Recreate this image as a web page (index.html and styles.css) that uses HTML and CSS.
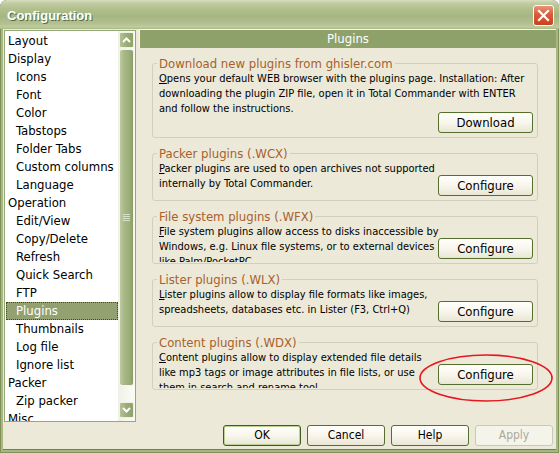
FILE: index.html
```html
<!DOCTYPE html>
<html lang="en">
<head>
<meta charset="utf-8">
<title>Configuration</title>
<link rel="stylesheet" href="styles.css">
</head>
<body>
<div class="window">
  <div class="titlebar">
    <span class="title">Configuration</span>
    <span class="close"><svg width="13" height="13" viewBox="0 0 13 13"><path d="M2 2 L11 11 M11 2 L2 11" stroke="#fff" stroke-width="2.2" stroke-linecap="square"/></svg></span>
  </div>
  <div class="client">
    <div class="main">
      <div class="tree">
        <ul class="items">
          <li class="l0">Layout</li>
          <li class="l0">Display</li>
          <li class="l1">Icons</li>
          <li class="l1">Font</li>
          <li class="l1">Color</li>
          <li class="l1">Tabstops</li>
          <li class="l1">Folder Tabs</li>
          <li class="l1">Custom columns</li>
          <li class="l1">Language</li>
          <li class="l0">Operation</li>
          <li class="l1">Edit/View</li>
          <li class="l1">Copy/Delete</li>
          <li class="l1">Refresh</li>
          <li class="l1">Quick Search</li>
          <li class="l1">FTP</li>
          <li class="l1 sel">Plugins</li>
          <li class="l1">Thumbnails</li>
          <li class="l1">Log file</li>
          <li class="l1">Ignore list</li>
          <li class="l0">Packer</li>
          <li class="l1">Zip packer</li>
          <li class="l0">Misc</li>
        </ul>
        <div class="vscroll">
          <div class="sbtn"><svg width="9" height="6" viewBox="0 0 9 6"><polyline points="1,5 4.5,1.5 8,5" fill="none" stroke="#fff" stroke-width="2"/></svg></div>
          <div class="thumb"><span class="grip"></span></div>
          <div class="track"></div>
          <div class="sbtn"><svg width="9" height="6" viewBox="0 0 9 6"><polyline points="1,1 4.5,4.5 8,1" fill="none" stroke="#fff" stroke-width="2"/></svg></div>
        </div>
      </div>
      <div class="panel">
        <div class="panel-head">Plugins</div>
        <div class="groups">
          <fieldset class="grp grp-first">
            <legend>Download new plugins from ghisler.com</legend>
            <div class="desc"><span class="u">O</span>pens your default WEB browser with the plugins page. Installation: After<br>downloading the plugin ZIP file, open it in Total Commander with ENTER<br>and follow the instructions.</div>
            <div class="btn-row"><button class="btn">Download</button></div>
          </fieldset>
          <fieldset class="grp">
            <legend>Packer plugins (.WCX)</legend>
            <div class="row">
              <div class="desc"><span class="u">P</span>acker plugins are used to open archives not supported<br>internally by Total Commander.</div>
              <button class="btn">Configure</button>
            </div>
          </fieldset>
          <fieldset class="grp">
            <legend>File system plugins (.WFX)</legend>
            <div class="row">
              <div class="desc"><span class="u">F</span>ile system plugins allow access to disks inaccessible by<br>Windows, e.g. Linux file systems, or to external devices<br>like Palm/PocketPC</div>
              <button class="btn">Configure</button>
            </div>
          </fieldset>
          <fieldset class="grp">
            <legend>Lister plugins (.WLX)</legend>
            <div class="row">
              <div class="desc"><span class="u">L</span>ister plugins allow to display file formats like images,<br>spreadsheets, databases etc. in Lister (F3, Ctrl+Q)</div>
              <button class="btn">Configure</button>
            </div>
          </fieldset>
          <fieldset class="grp">
            <legend>Content plugins (.WDX)</legend>
            <div class="row">
              <div class="desc"><span class="u">C</span>ontent plugins allow to display extended file details<br>like mp3 tags or image attributes in file lists, or use<br>them in search and rename tool</div>
              <button class="btn">Configure</button>
            </div>
          </fieldset>
        </div>
      </div>
    </div>
    <div class="buttons">
      <button class="dbtn default">OK</button>
      <button class="dbtn">Cancel</button>
      <button class="dbtn">Help</button>
      <button class="dbtn disabled">Apply</button>
    </div>
  </div>
  <svg class="mark" width="559" height="453" viewBox="0 0 559 453"><ellipse cx="486" cy="378" rx="66" ry="23" fill="none" stroke="#e8161e" stroke-width="1.6"/></svg>
</div>
</body>
</html>
```
FILE: styles.css
```css
* { box-sizing: border-box; }
html, body { margin: 0; padding: 0; background: #ffffff; }
body {
  width: 559px;
  height: 453px;
  overflow: hidden;
  font-family: "DejaVu Sans Condensed", "DejaVu Sans", sans-serif;
  color: #000;
}
.window {
  position: relative;
  width: 559px;
  height: 453px;
  display: flex;
  flex-direction: column;
  background: #a7b682;
  border-radius: 7px 7px 0 0;
  box-shadow: inset 0 0 0 1px #80925a;
}
.titlebar {
  height: 29px;
  flex: none;
  display: flex;
  align-items: center;
  justify-content: space-between;
  padding: 0 5px 0 7px;
  border-radius: 7px 7px 0 0;
  background: linear-gradient(to bottom, #d7dec0 0, #c2cda3 3px, #b1bf8d 9px, #a6b681 16px, #b1bf8f 23px, #c0cb9e 27px, #a9b885 29px);
}
.title {
  color: #fff;
  font: bold 13px "Liberation Sans", Arial, sans-serif;
  text-shadow: 1px 1px 0 #5c6b3c;
  padding-top: 1px;
}
.close {
  width: 21px;
  height: 21px;
  border: 1px solid #fdfdf8;
  border-radius: 3px;
  background: linear-gradient(#e8957a, #d85b3a 45%, #c6441f);
  display: flex;
  align-items: center;
  justify-content: center;
  margin-top: 2px;
}
.client {
  flex: 1;
  min-height: 0;
  margin: 0 3px 4px 3px;
  background: #ece9d8;
  display: flex;
  flex-direction: column;
  box-shadow: 0 1px 0 #6e7f4c;
}
.main {
  flex: none;
  height: 393px;
  display: flex;
}
.tree {
  width: 132px;
  height: 392px;
  flex: none;
  margin: 1px 0 0 1px;
  border: 1px solid #95a87a;
  background: #fff;
  display: flex;
}
.items {
  flex: 1;
  list-style: none;
  margin: 0;
  padding: 1px 0 0 1px;
  overflow: hidden;
  font-size: 13px;
}
.items li {
  height: 18px;
  line-height: 18px;
  white-space: nowrap;
}
.items .l0 { padding-left: 2px; }
.items .l1 { padding-left: 10px; }
.items .sel {
  background: #93a070;
  color: #fff;
  outline: 1px dotted #3e4a27;
  outline-offset: -1px;
}
.vscroll {
  width: 17px;
  flex: none;
  display: flex;
  flex-direction: column;
  padding: 1px 1px 3px 1px;
  background: linear-gradient(to right, #f1f0e7, #fbfbf6);
}
.sbtn {
  height: 16px;
  flex: none;
  border: 1px solid #eef1e4;
  border-radius: 2px;
  background: linear-gradient(to right, #b3c293, #9aad77 50%, #8fa26c);
  display: flex;
  align-items: center;
  justify-content: center;
}
.thumb {
  height: 337px;
  flex: none;
  margin-top: 1px;
  border: 1px solid #f3f5ec;
  border-radius: 3px;
  background: linear-gradient(to right, #bccaa0, #a6b783 35%, #9cae7a 70%, #8b9e68);
  display: flex;
  align-items: center;
  justify-content: center;
}
.grip {
  width: 7px;
  height: 7px;
  background: repeating-linear-gradient(to bottom, #d9e1c6 0, #d9e1c6 1px, transparent 1px, transparent 2px);
}
.track { flex: 1; }
.panel {
  flex: 1;
  min-width: 0;
  overflow: hidden;
  margin-left: 3px;
  display: flex;
  flex-direction: column;
}
.panel-head {
  height: 19px;
  flex: none;
  background: #8ea16b;
  color: #fff;
  text-align: center;
  font-size: 13px;
  line-height: 18px;
  border-top: 1px solid #f6f5ee;
  border-left: 1px solid #f6f5ee;
}
.groups {
  padding: 9px 18px 0 13px;
}
.grp {
  margin: 0 0 9px 0;
  border: 1px solid #d0d0bf;
  border-radius: 3px;
  padding: 0 4px 1px 6px;
  min-width: 0;
}
.grp legend {
  padding: 0 2px;
  margin-left: -2px;
  font-size: 13px;
  line-height: 13px;
  color: #a8602e;
}
.grp-first { padding-bottom: 4px; }
.desc {
  font-size: 11px;
  line-height: 15px;
  white-space: nowrap;
  padding-top: 1px;
}
.u { text-decoration: underline; }
.btn-row {
  display: flex;
  justify-content: flex-end;
  margin-top: -4px;
}
.row {
  display: flex;
  height: 39px;
  align-items: flex-end;
}
.row .desc {
  flex: 1;
  min-width: 0;
  align-self: stretch;
  clip-path: inset(0 -60px 0 0);
}
.row .btn { margin-bottom: 3px; }
.btn, .dbtn {
  font-family: inherit;
  color: #000;
  padding: 0;
  border: 1px solid #55702e;
  border-radius: 3px;
  background: linear-gradient(#fffffb, #f7f5eb 55%, #e9e6d4);
  flex: none;
}
.btn {
  width: 95px;
  height: 21px;
  font-size: 13px;
  line-height: 19px;
}
.buttons {
  display: flex;
  justify-content: flex-end;
  gap: 6px;
  padding: 3px 3px 0 0;
}
.dbtn {
  width: 78px;
  height: 21px;
  font-size: 12px;
  line-height: 19px;
}
.dbtn.default {
  border-color: #3f5d1d;
  box-shadow: inset 0 0 0 1px #bcd196;
}
.dbtn.disabled {
  color: #aca899;
  border-color: #cac8bb;
  background: #f5f4ea;
}
.mark {
  position: absolute;
  left: 0;
  top: 0;
  pointer-events: none;
}
```
